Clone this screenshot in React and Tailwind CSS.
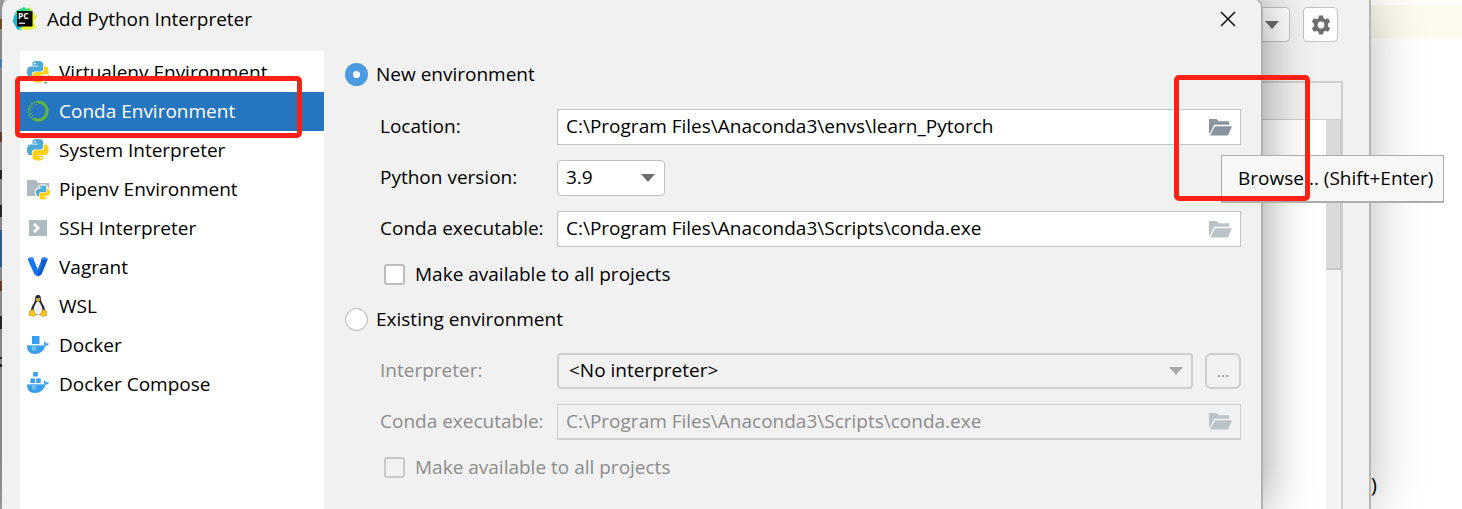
import { useState } from "react";

const PY_TOP =
  "M14.25.18l.9.2.73.26.59.3.45.32.34.34.25.34.16.33.1.3.04.26.02.2-.01.13V8.5l-.05.63-.13.55-.21.46-.26.38-.3.31-.33.25-.35.19-.35.14-.33.1-.3.07-.26.04-.21.02H8.77l-.69.05-.59.14-.5.22-.41.27-.33.32-.27.35-.2.36-.15.37-.1.35-.07.32-.04.27-.02.21v3.06H3.17l-.21-.03-.28-.07-.32-.12-.35-.18-.36-.26-.36-.36-.35-.46-.32-.59-.28-.73-.21-.88-.14-1.05-.05-1.23.06-1.22.16-1.04.24-.87.32-.71.36-.57.4-.44.42-.33.42-.24.4-.16.36-.1.32-.05.24-.01h.16l.06.01h8.16v-.83H6.18l-.01-2.75-.02-.37.05-.34.11-.31.17-.28.25-.26.31-.23.38-.2.44-.18.51-.15.58-.12.64-.1.71-.06.77-.04.84-.02 1.27.05zm-6.3 1.98l-.23.33-.08.41.08.41.23.34.33.22.41.09.41-.09.33-.22.23-.34.08-.41-.08-.41-.23-.33-.33-.22-.41-.09-.41.09z";
const PY_BOTTOM =
  "M21.04 6.11l.28.06.32.12.35.18.36.27.36.35.35.47.32.59.28.73.21.88.14 1.04.05 1.23-.06 1.23-.16 1.04-.24.86-.32.71-.36.57-.4.45-.42.33-.42.24-.4.16-.36.09-.32.05-.24.02-.16-.01h-8.22v.82h5.84l.01 2.76.02.36-.05.34-.11.31-.17.29-.25.25-.31.24-.38.2-.44.17-.51.15-.58.13-.64.09-.71.07-.77.04-.84.01-1.27-.04-1.07-.14-.9-.2-.73-.25-.59-.3-.45-.33-.34-.34-.25-.34-.16-.33-.1-.3-.04-.25-.02-.2.01-.13v-5.34l.05-.64.13-.54.21-.46.26-.38.3-.32.33-.24.35-.2.35-.14.33-.1.3-.06.26-.04.21-.02.13-.01h5.84l.69-.05.59-.14.5-.21.41-.28.33-.32.27-.35.2-.36.15-.36.1-.35.07-.32.04-.28.02-.21V6.07h2.09l.14.01zm-6.47 14.25l-.23.33-.08.41.08.41.23.33.33.23.41.08.41-.08.33-.23.23-.33.08-.41-.08-.41-.23-.33-.33-.23-.41-.08-.41.08z";

function Python() {
  return (
    <>
      <path d={PY_TOP} fill="#4fa9d6" />
      <path d={PY_BOTTOM} fill="#fdd01b" />
    </>
  );
}

function Icon({ children }) {
  return (
    <svg viewBox="0 0 22 22" className="size-[22px] shrink-0 overflow-visible" aria-hidden="true">
      {children}
    </svg>
  );
}

function PythonIcon() {
  return (
    <Icon>
      <g transform="scale(.9)"><Python /></g>
    </Icon>
  );
}

function VirtualenvIcon() {
  return (
    <Icon>
      <g transform="scale(.9)"><Python /></g>
      <path d="M13.5 13.5h9v9h-6z" fill="#fff" />
      <path d="M15 14.5l3.5 7.5M22 14.5l-3.5 7.5" stroke="#62b543" strokeWidth="2.2" strokeDasharray="2.4 1.1" fill="none" />
    </Icon>
  );
}

function CondaIcon() {
  return (
    <Icon>
      <path d="M11 2A9 9 0 1 1 7 19" fill="none" stroke="#5db345" strokeWidth="3.2" />
      <path d="M11 1.6A9.4 9.4 0 0 0 6.600 19.300" fill="none" stroke="#5db345" strokeWidth="1.8" strokeDasharray="1.8 1.1" />
      <path d="M10 4.300A7 7 0 0 0 7 17" fill="none" stroke="#5db345" strokeWidth="1.300" strokeDasharray="1.300 1.500" />
    </Icon>
  );
}

function PipenvIcon() {
  return (
    <Icon>
      <path d="M0 2h8.500l3 3H22v13H0z" fill="#afb9c0" />
      <g transform="translate(9 7.500) scale(.58)">
        <path d={PY_TOP} fill="#fff" stroke="#fff" strokeWidth="4" />
        <path d={PY_BOTTOM} fill="#fff" stroke="#fff" strokeWidth="4" />
        <Python />
      </g>
    </Icon>
  );
}

function SshIcon() {
  return (
    <Icon>
      <path d="M2 3h18v16H2z" fill="#afb9c0" />
      <path d="M7 6.800l4.200 4.200L7 15.200" fill="none" stroke="#fff" strokeWidth="2.600" />
    </Icon>
  );
}

function VagrantIcon() {
  return (
    <Icon>
      <path d="M1 2.500l2-1 3 0 .8 2.200L11 14v6.500l-3.500-2L1 4z" fill="#1474ee" />
      <path d="M20.500 2.500l-2-1h-3L14 3.700v1.800L11 13v7.500l3.500-2L20.500 4z" fill="#1159cc" />
      <path d="M1 2.500l2-1h3l1 1.500-2.500 1zM14 3.200l1.500-1.700h3l2 1-3 1.500z" fill="#2e8bff" />
      <path d="M11 13.500l3-7.500 1.500 1L11 17.500z" fill="#1474ee" />
    </Icon>
  );
}

function TuxIcon() {
  return (
    <Icon>
      <path d="M11 0C8.500 0 8 2 8.100 4.500 8.200 7.500 4 11 4 15.500L6 20h10l2-4.500C18 11 13.900 7.500 13.900 4.500 14 2 13.500 0 11 0z" fill="#26282b" />
      <path d="M11 6.500c-1.500 0-2 1.500-3 3.500-1.500 2.500-2.300 6-.5 8.500 1.500 1.800 5.500 1.800 7 0 1.800-2.500 1-6-.5-8.500-1-2-1.500-3.500-3-3.500z" fill="#f2f2f2" />
      <path d="M9 4.500l2-1 2 1v1l-2 1.500-2-1.500z" fill="#f0b91c" />
      <circle cx="9.800" cy="3.400" r=".7" fill="#ddd" />
      <circle cx="12.200" cy="3.400" r=".7" fill="#ddd" />
      <path d="M2.500 16l3-1.500 3.300 5-1.800 2-4.800-1.300zM19.500 16l-3-1.500-3.300 5 1.800 2 4.800-1.300z" fill="#fcc51c" stroke="#c58b12" strokeWidth=".6" />
    </Icon>
  );
}

function DockerHull() {
  return (
    <>
      <path d="M0 11h17.500c-.8-1.500-.7-2.700 0-3.800 1 .7 1.400 1.400 1.500 2.200 1-.3 2-.3 3 .1-.7 1.500-1.900 2.200-3.500 2.300C16.500 17.500 13 20 8 20 2.500 20 0 17 0 11z" fill="#389fee" />
      <path d="M0 11.700h17.500" stroke="#9bd0f7" strokeWidth=".8" />
      <circle cx="7" cy="14.500" r="1.600" fill="none" stroke="#d8edfc" strokeWidth=".8" />
    </>
  );
}

function DockerIcon() {
  return (
    <Icon>
      <path d="M5 2h7.500v8H5z" fill="#389fee" />
      <DockerHull />
    </Icon>
  );
}

function ComposeIcon() {
  return (
    <Icon>
      <path d="M6.200-1h4.600v4.500H6.200zM3.400 5.500h4.600V10H3.400zM9.200 5.500h4.600V10H9.200z" fill="#389fee" />
      <DockerHull />
    </Icon>
  );
}

function PyCharmIcon() {
  return (
    <svg viewBox="0 0 24 24" className="size-6 shrink-0" aria-hidden="true">
      <path d="M3 4l8-4 4 3-3 18-7 2-5-9z" fill="#22d789" />
      <path d="M1 8l-1 7 4 7 5 1-2-13z" fill="#14b9d6" />
      <path d="M14 2l4-2 1.500 5 4.500 5-3 5 3 6-9 2-9-1 6-4z" fill="#e8f53c" />
      <path d="M8 4l8-3 3 5-4 2z" fill="#3fe07c" />
      <path d="M4 4h15.500v15.500H4z" fill="#050505" />
      <text x="5" y="12" fill="#fff" fontSize="8.500" fontWeight="700" fontFamily="Open Sans, sans-serif">PC</text>
      <path d="M6 16.200h6" stroke="#fff" strokeWidth="1.200" />
    </svg>
  );
}

function FolderIcon() {
  return (
    <svg viewBox="0 0 23 17" className="h-[17px] w-[23px]" fill="currentColor" aria-hidden="true">
      <path d="M0 0h7.500l2.500 2.200h10.200v3.600H5.200L.8 14.500H0z" />
      <path d="M6 7.200h17L19 16.600H1z" />
    </svg>
  );
}

function Arrow() {
  return (
    <svg viewBox="0 0 14 8" className="h-2 w-3.5" fill="currentColor" aria-hidden="true">
      <path d="M0 0h14L7 8z" />
    </svg>
  );
}

const ITEMS = [
  ["Virtualenv Environment", VirtualenvIcon],
  ["Conda Environment", CondaIcon],
  ["System Interpreter", PythonIcon],
  ["Pipenv Environment", PipenvIcon],
  ["SSH Interpreter", SshIcon],
  ["Vagrant", VagrantIcon],
  ["WSL", TuxIcon],
  ["Docker", DockerIcon],
  ["Docker Compose", ComposeIcon],
];

function Row({ id, label, disabled, children }) {
  return (
    <div className="flex h-9 items-center">
      <label htmlFor={id} className={disabled ? "w-[177px] shrink-0 pb-0.5 text-[#8c8c8c]" : "w-[177px] shrink-0 pb-0.5"}>
        {label}
      </label>
      {children}
    </div>
  );
}

function PathField({ id, value, disabled, active }) {
  return (
    <div
      className={
        disabled
          ? "flex h-9 min-w-0 flex-1 items-center border border-b-2 border-[#cfcfcf] text-[#8c8c8c]"
          : "flex h-9 min-w-0 flex-1 items-center border border-[#c4c4c4] bg-white"
      }
    >
      <input
        id={id}
        type="text"
        defaultValue={value}
        disabled={disabled}
        className="h-full min-w-0 flex-1 bg-transparent px-2 pb-0.5 outline-none"
      />
      <button
        type="button"
        aria-label="Browse"
        disabled={disabled}
        className={active ? "mr-2 text-[#8a949c]" : "mr-2 text-[#bcc3c8]"}
      >
        <FolderIcon />
      </button>
    </div>
  );
}

function EnvRadio({ label, checked, onChange }) {
  return (
    <label className="flex items-center gap-2">
      <input
        type="radio"
        name="env"
        checked={checked}
        onChange={onChange}
        className="size-[23px] appearance-none rounded-full border border-[#b0b0b0] bg-white checked:border-8 checked:border-[#4c9be1]"
      />
      {label}
    </label>
  );
}

function Share({ disabled }) {
  return (
    <label className={disabled ? "flex h-[54px] items-center gap-2.5 pl-1 text-[#8c8c8c]" : "flex h-[54px] items-center gap-2.5 pl-1"}>
      <input
        type="checkbox"
        disabled={disabled}
        className="size-[21px] appearance-none rounded-[3px] border-2 border-[#bdbdbd] bg-white checked:bg-[#4c9be1] disabled:border-[#c8c8c8] disabled:bg-transparent"
      />
      Make available to all projects
    </label>
  );
}

function Background() {
  return (
    <div className="absolute inset-0 flex bg-white">
      <div className="relative flex min-w-0 flex-1 flex-col border-r-2 border-[#b5b5b5] bg-[#f1f1f1] shadow-[0_0_50px_rgba(0,0,0,0.28)]">
        <div className="flex h-[81px] justify-end gap-[13px] pt-[7px] pr-[31px]">
          <button type="button" aria-label="Choose interpreter" className="flex h-[35px] w-[50px] items-center justify-end rounded border border-[#c4c4c4] bg-white pr-2.5 text-[#6e6e6e]">
            <Arrow />
          </button>
          <button type="button" aria-label="Settings" className="flex size-[35px] items-center justify-center rounded border border-[#c4c4c4] bg-white text-[#6e6e6e]">
            <svg viewBox="0 0 20 20" className="size-5" aria-hidden="true">
              <path
                fill="currentColor"
                fillRule="evenodd"
                d="M8 .5h4l.6 2.800 1.700 1 2.800-1 2 3.400-2.200 2v2.600l2.200 2-2 3.400-2.800-1-1.700 1L12 19.500H8l-.6-2.800-1.700-1-2.800 1-2-3.400 2.200-2V8.700l-2.200-2 2-3.400 2.800 1 1.700-1zM10 6.600a3.400 3.400 0 1 0 0 6.800 3.400 3.400 0 0 0 0-6.800z"
              />
            </svg>
          </button>
        </div>
        <div className="mr-[26px] flex flex-1 flex-col border-t-2 border-r-2 border-[#cfcfcf]">
          <div className="h-[37px] border-b border-[#cfcfcf]" />
          <div className="flex flex-1 justify-end bg-white">
            <div className="w-[15px] bg-[#f4f4f4]">
              <div className="h-[150px] border-r border-b-2 border-[#c8c8c8] bg-[#dadada]" />
            </div>
          </div>
        </div>
      </div>
      <div className="flex w-[91px] flex-col justify-between pt-[5px] pb-2.5">
        <div className="h-[33px] bg-[#fcfaec]" />
        <div className="h-7 text-xl leading-7">)</div>
      </div>
    </div>
  );
}

export default function App() {
  const [env, setEnv] = useState("new");
  const [selected, setSelected] = useState("Conda Environment");
  return (
    <div className="relative min-h-screen overflow-hidden font-['Open_Sans','Noto_Sans',sans-serif] text-[19px] leading-6 text-black">
      <Background />
      <svg viewBox="0 0 4 509" className="absolute top-0 left-0 h-[509px] w-1" aria-hidden="true">
        <path d="M0 0h4v509H0z" fill="#a9a9ae" />
        <path d="M0 19h2v10H0z" fill="#805b32" />
        <path d="M0 59h2v8H0z" fill="#5d9bc9" />
        <path d="M0 132h2v10H0zM0 281h2v10H0z" fill="#7b4a3a" />
        <path d="M0 170h2v9H0zM0 205h2v12H0zM0 316h2v13H0zM0 357h2v2H0zM0 364h2v3H0z" fill="#2e3036" />
        <path d="M0 230h2v37H0z" fill="#3f6fa3" />
      </svg>
      <main className="relative -mt-0.5 mr-[199px] ml-0.5 flex min-h-[511px] flex-col rounded-t-[10px] border-t border-r-2 border-[#b0b0b0] bg-[#f1f1f1] shadow-[0_0_50px_rgba(0,0,0,0.42)]">
        <header className="flex h-[52px] items-center gap-2.5 pr-[25px] pb-3 pl-[11px]">
          <PyCharmIcon />
          <h1 className="flex-1">Add Python Interpreter</h1>
          <button type="button" aria-label="Close">
            <svg viewBox="0 0 16 16" className="size-4" aria-hidden="true">
              <path d="M1 1l14 14M15 1L1 15" stroke="#111" strokeWidth="1.500" />
            </svg>
          </button>
        </header>
        <div className="flex flex-1 gap-[21px] pr-5 pl-[18px]">
          <nav className="w-[304px] shrink-0 bg-white pt-0.5">
            {ITEMS.map(([name, Glyph]) => (
              <button
                key={name}
                type="button"
                onClick={() => setSelected(name)}
                className={
                  name === selected
                    ? "flex h-[39px] w-full items-center gap-2.5 bg-[#2675bf] pb-0.5 pl-[7px] text-left text-white"
                    : "flex h-[39px] w-full items-center gap-2.5 pb-0.5 pl-[7px] text-left"
                }
              >
                <Glyph />
                {name}
              </button>
            ))}
          </nav>
          <form className="min-w-0 flex-1" onSubmit={(e) => e.preventDefault()}>
            <div className="flex h-12 items-center pb-0.5">
              <EnvRadio label="New environment" checked={env === "new"} onChange={() => setEnv("new")} />
            </div>
            <div className="flex flex-col gap-[15px] pt-2.5 pl-[35px]">
              <Row id="location" label="Location:">
                <PathField id="location" value="C:\Program Files\Anaconda3\envs\learn_Pytorch" active />
              </Row>
              <Row id="version" label="Python version:">
                <div className="grid w-[108px] items-center">
                  <select id="version" className="col-start-1 row-start-1 h-9 appearance-none rounded border border-[#c0c0c0] bg-white pb-0.5 pl-2">
                    <option>3.9</option>
                    <option>3.8</option>
                  </select>
                  <span className="pointer-events-none col-start-1 row-start-1 mr-2.5 justify-self-end text-[#6e6e6e]">
                    <Arrow />
                  </span>
                </div>
              </Row>
              <Row id="conda-new" label="Conda executable:">
                <PathField id="conda-new" value="C:\Program Files\Anaconda3\Scripts\conda.exe" />
              </Row>
            </div>
            <div className="pl-[35px]">
              <Share />
            </div>
            <div className="flex h-9 items-center">
              <EnvRadio label="Existing environment" checked={env === "existing"} onChange={() => setEnv("existing")} />
            </div>
            <div className="flex flex-col gap-[15px] pt-4 pl-[35px]">
              <Row id="interpreter" label="Interpreter:" disabled>
                <div className="grid min-w-0 flex-1 items-center">
                  <select id="interpreter" disabled className="col-start-1 row-start-1 h-9 appearance-none rounded border-2 border-[#cfcfcf] pb-0.5 pl-2.5 text-black opacity-100">
                    <option>&lt;No interpreter&gt;</option>
                  </select>
                  <span className="pointer-events-none col-start-1 row-start-1 mr-2.5 justify-self-end text-[#ababab]">
                    <Arrow />
                  </span>
                </div>
                <button type="button" disabled className="ml-3 flex size-9 items-center justify-center rounded-md border-2 border-[#cfcfcf] text-base text-[#8c8c8c]">
                  ...
                </button>
              </Row>
              <Row id="conda-existing" label="Conda executable:" disabled>
                <PathField id="conda-existing" value="C:\Program Files\Anaconda3\Scripts\conda.exe" disabled />
              </Row>
            </div>
            <div className="pl-[35px]">
              <Share disabled />
            </div>
          </form>
        </div>
      </main>
      <div role="tooltip" className="absolute top-[155px] right-[18px] flex h-12 w-[223px] items-center border border-b-2 border-[#adadad] bg-[#f7f7f7] pb-0.5 pl-4 whitespace-nowrap">
        Browse... (Shift+Enter)
      </div>
      <div className="pointer-events-none absolute top-[76px] left-[15px] h-[62px] w-[287px] rounded-[5px] border-5 border-[#ff2116]" />
      <div className="pointer-events-none absolute top-[75px] right-[152px] h-[126px] w-[136px] rounded-[5px] border-5 border-[#ff2116]" />
    </div>
  );
}
